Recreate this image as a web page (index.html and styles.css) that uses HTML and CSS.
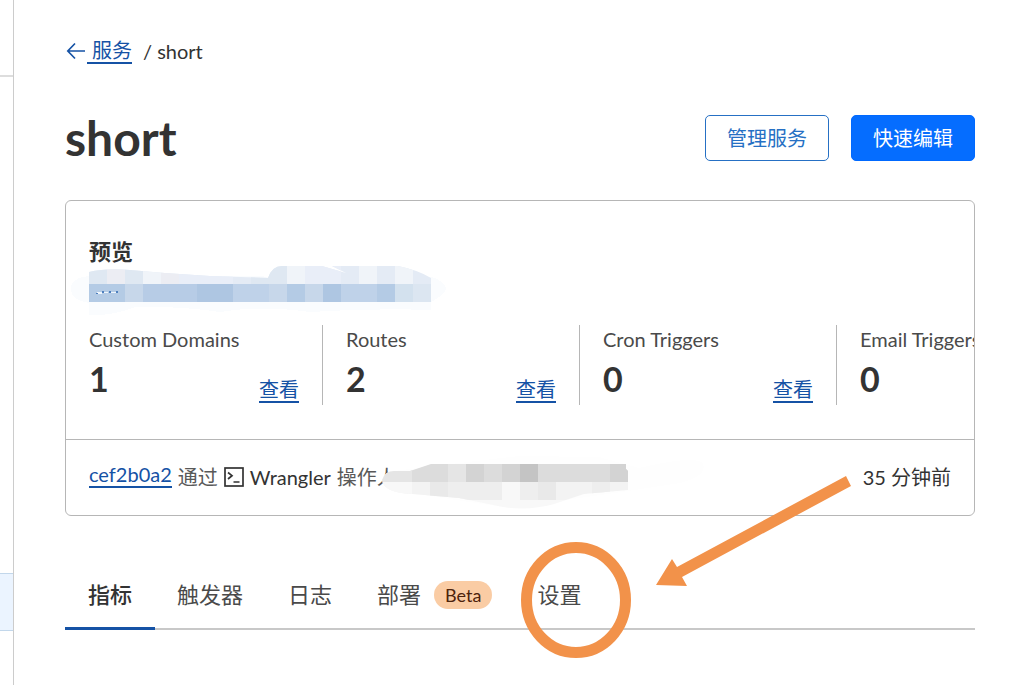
FILE: index.html
```
<!DOCTYPE html>
<html lang="zh-CN">
<head>
<meta charset="utf-8">
<meta name="viewport" content="width=device-width, initial-scale=1">
<title>short</title>
<link rel="stylesheet" href="styles.css">
</head>
<body>
<div class="page">
  <aside class="rail">
    <div class="rail-top"></div>
    <div class="rail-gap"></div>
    <div class="rail-active"></div>
  </aside>
  <main class="main">
    <nav class="crumbs">
      <svg class="back" width="20" height="20" viewBox="0 0 20 20" fill="none" stroke="#1552a5" stroke-width="1.7"><path d="M19 10H2M9 2.5L1.8 10L9 17.5"/></svg>
      <a class="link crumb-link" href="#">服务</a>
      <span>/ short</span>
    </nav>
    <header class="head">
      <h1 class="title">short</h1>
      <div class="actions">
        <button class="btn btn-outline" type="button">管理服务</button>
        <button class="btn btn-primary" type="button">快速编辑</button>
      </div>
    </header>
    <section class="card">
      <div class="preview">
        <h2 class="preview-title">预览</h2>
        <svg class="mosaic" width="380" height="60" viewBox="70 260 380 60" shape-rendering="crispEdges">
          <defs><clipPath id="top-edge"><path d="M89 272Q106 268 130 270L165 273L210 276L268 278Q272 266 282 266H322L346 273L332 266H398Q418 270 431 278V284H89Z"/></clipPath></defs>
          <path fill="#fafcfe" d="M89 276Q70 278 71 290Q72 300 89 303V315Q112 316 136 307Q180 306 220 312Q260 305 310 312Q370 308 431 310V302Q449 292 445 286Q440 279 431 277Z"/>
          <g clip-path="url(#top-edge)">
            <path fill="#e4ebf5" d="M89 266h342v18H89z"/>
            <path fill="#ecedf3" d="M107 266h18v18h-18zM161 266h18v18h-18z"/>
            <path fill="#dfe8f2" d="M89 266h18v18H89zM125 266h18v18h-18zM251 266h36v18h-36z"/>
            <path fill="#f0f4f9" d="M143 266h18v18h-18zM287 266h18v18h-18zM359 266h18v18h-18zM395 266h18v18h-18z"/>
            <path fill="#e9eef8" d="M179 266h54v18h-54zM305 266h36v18h-36z"/>
          </g>
          <path fill="#bfd2e9" d="M89 284h342v18H89z"/>
          <path fill="#b4cbe5" d="M89 284h36v18H89zM287 284h18v18h-18zM377 284h18v18h-18z"/>
          <path fill="#c7d7ea" d="M125 284h18v18h-18zM269 284h18v18h-18zM305 284h18v18h-18z"/>
          <path fill="#b7cce6" d="M143 284h54v18h-54z"/>
          <path fill="#aec6e2" d="M197 284h36v18h-36zM323 284h18v18h-18z"/>
          <path fill="#d3e1ee" d="M395 284h18v18h-18z"/><path fill="#dce6f1" d="M413 284h18v18h-18z"/>
          <path fill="#eff6fd" d="M97 292h5v2h-5zM104 292h4v1h-4zM111 292h5v1h-5z"/>
          <path fill="#4d7fbe" d="M102 291h2v2h-2zM109 291h2v2h-2zM116 291h2v2h-2zM96 293h2v1h-2z"/>
        </svg>
      </div>
      <div class="stats">
        <div class="stat"><div class="stat-label">Custom Domains</div><div class="stat-row"><strong class="stat-value">1</strong><a class="link" href="#">查看</a></div></div>
        <div class="stat"><div class="stat-label">Routes</div><div class="stat-row"><strong class="stat-value">2</strong><a class="link" href="#">查看</a></div></div>
        <div class="stat"><div class="stat-label">Cron Triggers</div><div class="stat-row"><strong class="stat-value">0</strong><a class="link" href="#">查看</a></div></div>
        <div class="stat"><div class="stat-label">Email Triggers</div><div class="stat-row"><strong class="stat-value">0</strong></div></div>
      </div>
      <div class="deploy">
        <a class="link hash" href="#">cef2b0a2</a>
        <span class="muted">通过</span>
        <svg class="terminal" width="20" height="20" viewBox="0 0 20 20" fill="none" stroke="#333" stroke-width="1.7"><rect x="1" y="1" width="18" height="18"/><path d="M4 5.5L8 8.7L4 12M9.5 15H15.5"/></svg>
        <span>Wrangler</span>
        <span class="muted operator">操作人
          <svg class="redact" width="330" height="60" viewBox="375 456 330 60">
            <defs><clipPath id="smudge"><path d="M383 480Q386 471 395 471H411L432 464H627V469L629 471V490L585 494L555 504Q530 511 504 507L460 498L413 494Q385 493 383 480Z"/></clipPath></defs>
            <path fill="#fefefe" d="M395 471Q460 463 520 456L600 457L640 468Q690 456 703 462Q711 475 681 483L629 491L510 508L405 492Z"/>
            <g clip-path="url(#smudge)" shape-rendering="crispEdges">
              <path fill="#fff" d="M380 460h250v52H380z"/>
              <path fill="#dcdcdc" d="M395 464h234v18H395z"/>
              <path fill="#e5e5e5" d="M383 464h30v18h-30zM449 464h18v18h-18z"/>
              <path fill="#d3d3d3" d="M467 464h18v18h-18zM503 464h18v18h-18zM611 464h18v18h-18z"/>
              <path fill="#c4c4c4" d="M521 464h18v18h-18z"/>
              <path fill="#f3f3f3" d="M383 482h246v18H383z"/>
              <path fill="#e9e9e9" d="M431 482h18v18h-18zM539 482h18v18h-18z"/>
              <path fill="#eee" d="M449 482h54v18h-54zM521 482h18v18h-18zM593 482h18v18h-18z"/>
              <path fill="#f8f8f8" d="M383 482h30v18h-30zM503 482h18v18h-18zM431 500h144v12H431z"/>
            </g>
          </svg>
        </span>
        <time class="ago">35 分钟前</time>
      </div>
    </section>
    <nav class="tabs">
      <a class="tab tab-active" href="#">指标</a>
      <a class="tab" href="#">触发器</a>
      <a class="tab" href="#">日志</a>
      <a class="tab" href="#">部署<span class="badge">Beta</span></a>
      <a class="tab" href="#">设置</a>
    </nav>
    <svg class="marks" width="340" height="190" viewBox="515 472 340 190">
      <ellipse cx="576" cy="600" rx="49.5" ry="52.5" fill="none" stroke="#f2924a" stroke-width="11"/>
      <path fill="#f2924a" d="M656 585L672 559L677 567L846 476L851 486L682 577L687 586Z"/>
    </svg>
  </main>
</div>
</body>
</html>
```
FILE: styles.css
```
* { box-sizing: border-box; }
body {
  margin: 0;
  background: #fff;
  color: #333;
  font: 20px/24px Lato, "Noto Sans CJK SC", sans-serif;
}
.page { display: flex; min-height: 100vh; }
.rail {
  flex: none;
  display: flex;
  flex-direction: column;
  width: 14px;
  border-right: 1px solid #ccc;
}
.rail-top { height: 77px; border-bottom: 2px solid #ddd; }
.rail-gap { height: 496px; }
.rail-active {
  height: 58px;
  background: #ebf4ff;
  border: solid #c2d7eb;
  border-width: 1px 0;
}
.main {
  position: relative;
  flex: 1;
  min-width: 0;
  padding: 38px 50px 0 51px;
}
.link {
  color: #1552a5;
  text-decoration: none;
  border-bottom: 2px solid #1552a5;
}
.crumbs { display: flex; align-items: center; height: 26px; }
.back { margin: 0 1px; }
.crumb-link { padding-left: 5px; margin-right: 11px; }
.head {
  display: flex;
  align-items: center;
  justify-content: space-between;
  margin: 51px 0 39px;
}
.title { margin: 0; font-size: 48px; line-height: 46px; font-weight: 700; }
.actions { display: flex; gap: 22px; }
.btn {
  height: 46px;
  padding: 0 21px;
  border: 1px solid #0069ff;
  border-radius: 5px;
  font: inherit;
}
.btn-outline { background: #fff; color: #2670c4; border-color: #2670c4; }
.btn-primary { background: #056dff; color: #fff; }
.card {
  border: 1px solid #b6b6b6;
  border-radius: 6px;
  overflow: hidden;
}
.preview { position: relative; height: 124px; padding: 38px 23px 0; }
.preview-title { margin: 0; font-size: 22px; line-height: 26px; }
.mosaic { position: absolute; left: 4px; top: 59px; }
.stats { display: flex; height: 80px; margin-bottom: 34px; }
.stat {
  flex: none;
  width: 257px;
  padding: 2px 23px 0;
  border-right: 1px solid #b6b6b6;
}
.stat-label { color: #4a4a4a; white-space: nowrap; }
.stat-row { display: flex; justify-content: space-between; align-items: flex-end; height: 52px; }
.stat-value { font-size: 34px; line-height: 48px; }
.deploy {
  display: flex;
  align-items: center;
  height: 76px;
  padding: 0 23px 2px;
  border-top: 1px solid #b6b6b6;
  white-space: nowrap;
}
.hash { margin: 0 6px 4px 0; }
.muted { color: #595959; }
.terminal { margin: 0 6px; }
.operator { position: relative; margin-left: 6px; }
.redact { position: absolute; left: 37px; top: -9px; }
.ago { margin-left: auto; }
.tabs {
  display: flex;
  margin-top: 56px;
  border-bottom: 2px solid #c8c8c8;
  font-size: 22px;
}
.tab {
  display: flex;
  align-items: center;
  height: 58px;
  padding: 0 23px 13px 22px;
  margin-bottom: -2px;
  color: #4a4a4a;
  text-decoration: none;
}
.tab-active { padding: 0 23px 10px; color: #333; font-weight: 500; border-bottom: 3px solid #1552a5; }
.badge {
  margin-left: 13px;
  padding: 0 11px;
  border-radius: 14px;
  background: #facca4;
  color: #4d230c;
  font-size: 18px;
  line-height: 28px;
}
.marks { position: absolute; left: 501px; top: 472px; pointer-events: none; }
```
